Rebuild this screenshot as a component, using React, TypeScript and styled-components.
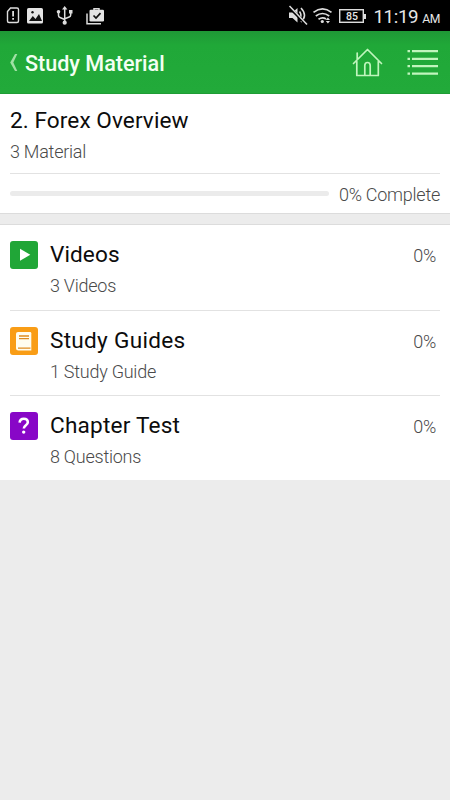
import React from 'react';
import styled, { createGlobalStyle } from 'styled-components';

const GlobalStyle = createGlobalStyle`
  * { box-sizing: border-box; }
  body { margin: 0; background: #ececec; font-family: Roboto, "Liberation Sans", sans-serif; }
  svg { display: block; flex: none; }
`;

const Screen = styled.main`
  width: 450px;
  height: 800px;
  overflow: hidden;
  background: #ececec;
`;

const StatusBar = styled.div`
  height: 31px;
  display: flex;
  justify-content: space-between;
  background: #000;
  color: #e6e6e6;
`;

const Clock = styled.div`
  display: flex;
  align-items: baseline;
  padding: 6px 10px 0 0;
  font-size: 18.8px;
  line-height: 22px;
  letter-spacing: -0.4px;
  white-space: nowrap;
`;

const Meridiem = styled.span`
  margin-left: 4px;
  font-size: 12.2px;
`;

const StatusRight = styled.div`
  display: flex;
`;

const Header = styled.header`
  height: 63px;
  display: flex;
  align-items: center;
  background: linear-gradient(#1f9736 0, #20a838 14px, #22aa3a 100%);
  border-bottom: 1px solid #1f9c35;
`;

const HeaderTitle = styled.h1`
  flex: 1;
  margin: 4px 0 0 5px;
  color: #f3fff3;
  font-size: 21.6px;
  line-height: 30px;
  font-weight: 500;
  letter-spacing: -0.02px;
`;

const Summary = styled.section`
  height: 120px;
  padding: 12px 10px 0;
  background: #fff;
  border-bottom: 1px solid #dcdcdc;
`;

const Title = styled.h2<{ $tracking?: number }>`
  margin: 0;
  color: #0c0c0c;
  font-size: 22.6px;
  line-height: 30px;
  font-weight: 400;
  letter-spacing: ${(p) => p.$tracking ?? 0}px;
  white-space: nowrap;
`;

const Caption = styled.div`
  color: #4a4a4a;
  font-size: 18px;
  line-height: 24px;
  font-weight: 300;
  letter-spacing: -0.25px;
  white-space: nowrap;
`;

const Material = styled(Caption)`
  margin-top: 4px;
  padding-bottom: 9px;
  height: 34px;
  border-bottom: 1px solid #e2e2e2;
`;

const ProgressRow = styled.div`
  display: flex;
  align-items: center;
  justify-content: space-between;
  padding-top: 9px;
`;

const Track = styled.div`
  width: 319px;
  height: 5px;
  margin-bottom: 3px;
  border-radius: 3px;
  background: #ebebeb;
`;

const List = styled.section`
  height: 256px;
  margin-top: 10px;
  padding: 0 10px;
  border-top: 1px solid #dcdcdc;
  background: #fff;
`;

const Row = styled.article`
  display: flex;
  align-items: flex-start;
  height: 85.5px;
  padding-top: 15px;
  border-bottom: 1px solid #e2e2e2;
  &:last-child { border-bottom: 0; }
`;

const Badge = styled.div<{ $color: string }>`
  width: 28px;
  height: 28px;
  margin-top: 1.4px;
  border-radius: 3px;
  background: ${(p) => p.$color};
`;

const RowText = styled.div`
  flex: 1;
  margin-left: 12px;
`;

const RowCaption = styled(Caption)`
  margin-top: 4px;
`;

const Percent = styled(Caption)`
  margin: 4px 4px 0 0;
`;

const NotificationIcons = () => (
  <svg width="120" height="31" viewBox="0 0 120 31" fill="none">
    <path d="M10.500 8H17q1.500 0 1.500 1.500V21q0 1.500-1.500 1.500H9Q7.500 22.500 7.500 21v-9.500z" stroke="#ddd" strokeWidth="1.400" />
    <path d="M12.200 11h1.800v5.500h-1.800zM12.200 18h1.800v1.800h-1.800z" fill="#ddd" />
    <rect x="27" y="8" width="16" height="15.500" rx="1.600" fill="#e4e4e4" />
    <path d="M29 21l3.800-5 2.700 3 3.500-5 3 7z" fill="#111" />
    <circle cx="32.500" cy="12.300" r="1.200" fill="#111" />
    <path d="M64.700 8v14M58.500 12.500v3q0 1.500 1.500 2l4.700 2M70.700 12v3q0 1.500-1.500 2l-4.500 1.700" stroke="#ddd" strokeWidth="1.500" />
    <path d="M62 9.500l2.700-3.500 2.700 3.500zM69 10h3.500v3.500H69z" fill="#ddd" />
    <circle cx="58.500" cy="11.800" r="1.800" fill="#ddd" />
    <circle cx="64.700" cy="22.700" r="2.100" fill="#ddd" />
    <path d="M87 13.500V23.700h14" stroke="#ddd" strokeWidth="1.500" />
    <path d="M94 10V8.700h5V10" stroke="#ddd" strokeWidth="1.500" />
    <rect x="89.500" y="9.800" width="14.500" height="11.700" rx="1.300" fill="#e4e4e4" />
    <path d="M93.500 15.500l2.500 2.500 4.500-4.800" stroke="#111" strokeWidth="1.700" />
  </svg>
);

const BatteryBox = styled.div`
  position: relative;
  flex: none;
  width: 25px;
  height: 14px;
  margin: 8.5px 9px 0 6px;
  border: 1px solid #ddd;
  box-shadow: inset 0 0 0 0.5px #bbb;
  font-size: 10.5px;
  line-height: 13px;
  font-weight: 500;
  text-align: center;
  &::after {
    content: "";
    position: absolute;
    right: -3px;
    top: 4px;
    width: 2px;
    height: 5px;
    background: #ddd;
  }
`;

const SignalIcons = () => (
  <svg width="46" height="31" viewBox="287 0 46 31" fill="none">
    <path d="M289 12.500h3.500l5-4.500v14.500l-5-4.500H289z" fill="#ddd" />
    <path d="M299.500 11.500q3 4 0 7.500M301 8q7 7.500 0 14" stroke="#ddd" strokeWidth="1.600" />
    <path d="M289 7l18 18" stroke="#000" strokeWidth="3" />
    <path d="M289.500 6l17.500 18.500" stroke="#ddd" strokeWidth="1.500" />
    <path d="M313.500 12.300q9-7 18 0M315.800 16q6.700-5 13.400 0M318.500 19.300q4-2.800 7.500-.3" stroke="#ddd" strokeWidth="1.700" />
    <circle cx="322.300" cy="21.500" r="1.600" fill="#ddd" />
    <path d="M325.800 20h4.200l-2.100-2.600zM325.800 21h4.200l-2.100 2.600z" fill="#ddd" />
  </svg>
);

const BackIcon = () => (
  <svg width="20" height="32" viewBox="0 0 20 32" fill="none">
    <path d="M15 8h2.300L13.300 16.500l4 8.500H15L10.200 16.500z" fill="#a0e0a4" />
  </svg>
);

const HeaderIcons = () => (
  <svg width="110" height="62" viewBox="340 31 110 62" fill="none">
    <path d="M353.500 63.500l14-14 14 14M356.800 61.500V75.500h21.500V61.500M357.200 59.500v-6.500M364.800 75.200V65.500q0-3 2.700-3t2.700 3v9.700" stroke="#c0f5bd" strokeWidth="1.700" strokeLinecap="round" strokeLinejoin="round" />
    <path d="M412 51.200h26M412 58.800h26M412 66.200h26M412 73.700h26M407.500 51.200h2.500M407.500 58.800h2.500M407.500 66.200h2.500M407.500 73.700h2.500" stroke="#c0f5bd" strokeWidth="2.200" />
  </svg>
);

const PlayIcon = () => (
  <svg width="28" height="28"><path d="M10 7.800l10.300 6-10.300 6z" fill="#fff" /></svg>
);

const BookIcon = () => (
  <svg width="28" height="28" fill="none">
    <path d="M8 5h12q1.300 0 1.300 1.300V23.500H8.500Q6 23.500 6 21V7q0-2 2-2z" fill="#fffdf0" />
    <path d="M9 9h10M9 11.700h10M8 21.200h12.500" stroke="#df8c20" strokeWidth="1.300" />
  </svg>
);

const QuestionIcon = () => (
  <svg width="28" height="28" fill="none">
    <path d="M9.600 10.600q.4-3.800 4.200-3.800 4 0 4 3.400 0 1.700-1.900 3.100-2.100 1.500-2.100 3.300" stroke="#fff" strokeWidth="2.600" />
    <circle cx="13.700" cy="20.100" r="1.700" fill="#fff" />
  </svg>
);

const rows = [
  { title: 'Videos', caption: '3 Videos', color: '#20a637', icon: <PlayIcon />, tracking: 0.08 },
  { title: 'Study Guides', caption: '1 Study Guide', color: '#f99d16', icon: <BookIcon />, tracking: 0.28 },
  { title: 'Chapter Test', caption: '8 Questions', color: '#8807c7', icon: <QuestionIcon />, tracking: 0.2 },
];

export default function App() {
  return (
    <Screen>
      <GlobalStyle />
      <StatusBar>
        <NotificationIcons />
        <StatusRight>
          <SignalIcons />
          <BatteryBox>85</BatteryBox>
          <Clock>11:19<Meridiem>AM</Meridiem></Clock>
        </StatusRight>
      </StatusBar>
      <Header>
        <BackIcon />
        <HeaderTitle>Study Material</HeaderTitle>
        <HeaderIcons />
      </Header>
      <Summary>
        <Title $tracking={0.08}>2. Forex Overview</Title>
        <Material>3 Material</Material>
        <ProgressRow>
          <Track />
          <Caption>0% Complete</Caption>
        </ProgressRow>
      </Summary>
      <List>
        {rows.map((row) => (
          <Row key={row.title}>
            <Badge $color={row.color}>{row.icon}</Badge>
            <RowText>
              <Title as="h3" $tracking={row.tracking}>{row.title}</Title>
              <RowCaption>{row.caption}</RowCaption>
            </RowText>
            <Percent>0%</Percent>
          </Row>
        ))}
      </List>
    </Screen>
  );
}
